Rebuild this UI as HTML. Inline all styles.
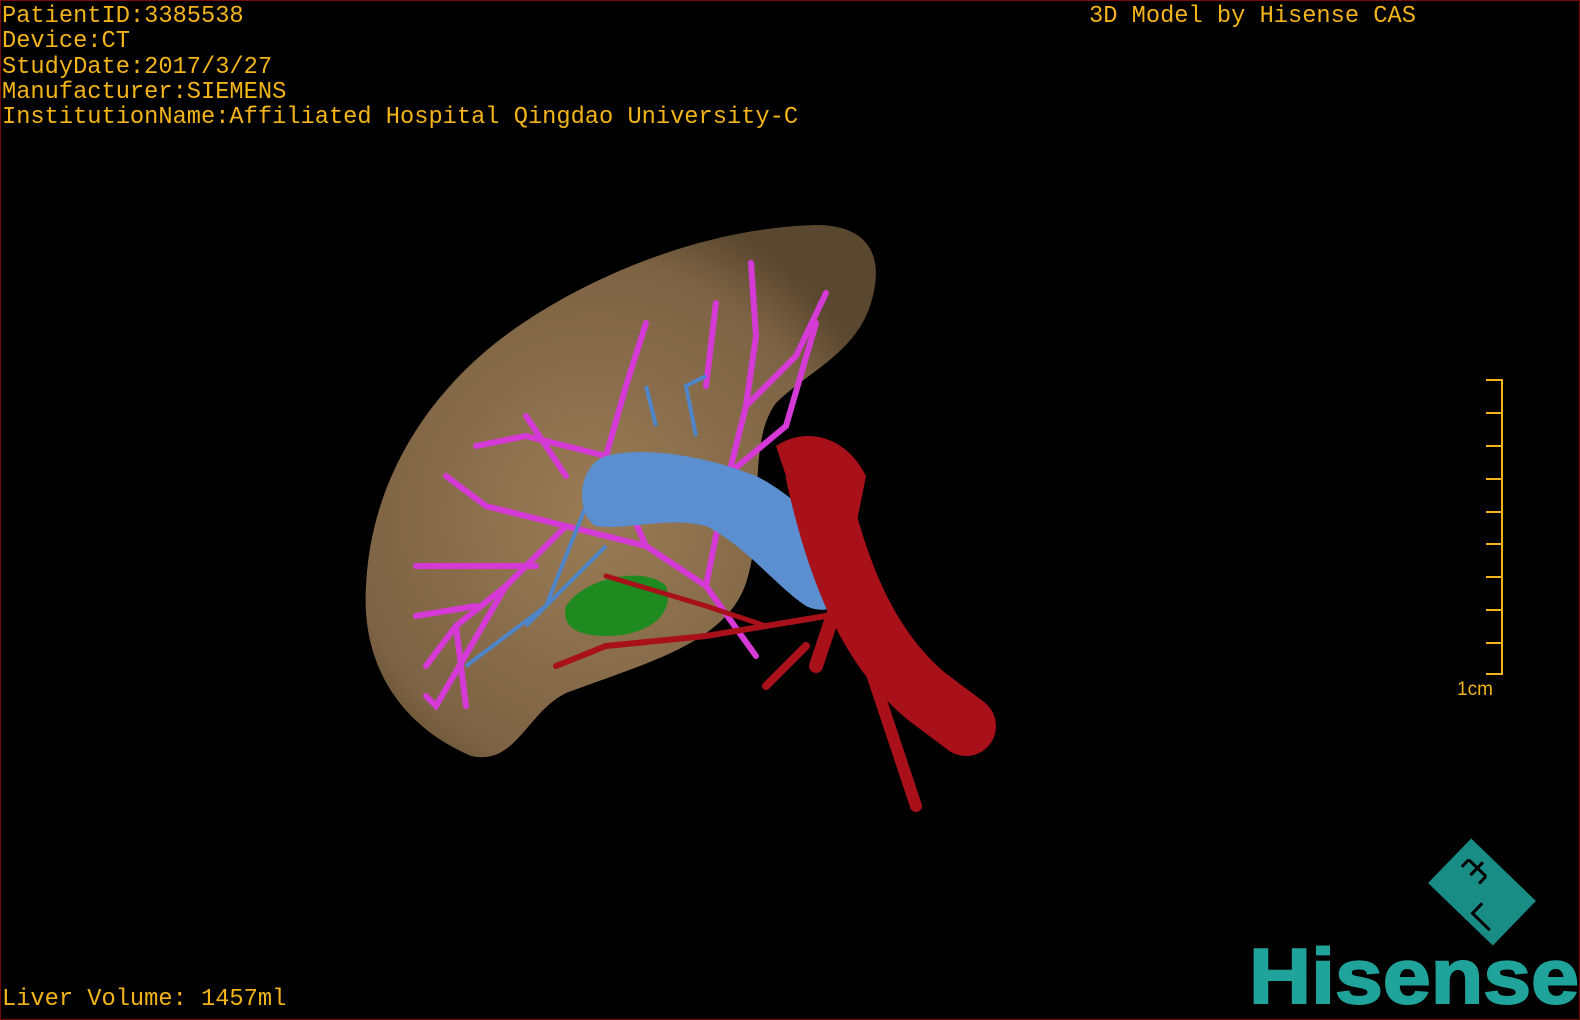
<!DOCTYPE html>
<html><head><meta charset="utf-8"><style>
html,body{margin:0;padding:0;background:#000;}
#c{position:relative;width:1580px;height:1020px;background:#000;overflow:hidden;box-sizing:border-box;border:1px solid #7a0a0a;}
.t{position:absolute;color:#f2b419;font-family:"Liberation Mono",monospace;font-size:23.7px;line-height:25.3px;white-space:pre;}
</style></head><body><div id="c">
<div class="t" style="left:1px;top:3px">PatientID:3385538
Device:CT
StudyDate:2017/3/27
Manufacturer:SIEMENS
InstitutionName:Affiliated Hospital Qingdao University-C</div>
<div class="t" style="left:1088px;top:3px">3D Model by Hisense CAS</div>
<div class="t" style="left:1px;top:986px">Liver Volume: 1457ml</div>
<svg width="1580" height="1020" style="position:absolute;left:0;top:0">
<defs><radialGradient id="lv" cx="0.45" cy="0.55" r="0.6"><stop offset="0" stop-color="#9a7b55"/><stop offset="0.8" stop-color="#7d6344"/><stop offset="1" stop-color="#5a4730"/></radialGradient></defs>
<path d="M470 755 C400 725 360 665 365 585 C370 475 432 382 522 322 C612 262 722 226 815 224 C865 224 885 252 870 302 C855 352 805 372 775 402 C745 442 765 522 745 582 C725 642 645 662 565 692 C525 712 515 765 470 755 Z" fill="url(#lv)"/>
<g stroke="#d63ad6" stroke-width="6" fill="none" stroke-linecap="round">
<path d="M755 655 L705 585 L645 545 L565 525 L485 505 L445 475"/>
<path d="M645 545 L605 455 L625 385 L645 322"/>
<path d="M605 455 L525 435 L475 445"/>
<path d="M705 585 L725 485 L745 405 L755 335 L750 262"/>
<path d="M745 405 L795 355 L825 292"/><path d="M725 475 L785 425 L815 322"/>
<path d="M565 525 L505 585 L455 625 L425 665"/><path d="M505 585 L435 705 L425 695"/>
<path d="M535 565 L415 565"/><path d="M475 605 L415 615"/><path d="M705 385 L715 302"/>
<path d="M455 625 L465 705"/><path d="M565 475 L525 415"/>
</g>
<path d="M565 605 C585 575 645 565 665 585 C675 615 645 635 605 635 C575 635 560 625 565 605Z" fill="#1f8a1f"/>
<g stroke="#4f85c9" stroke-width="4" fill="none"><path d="M585 505 L545 605 L465 665"/><path d="M605 545 L525 625"/><path d="M695 435 L685 385 L705 375"/><path d="M655 425 L645 385"/></g>
<path d="M605 455 C645 445 705 455 755 475 C795 495 835 535 845 575 C850 605 825 615 805 605 C775 585 745 545 705 525 C665 515 625 530 595 525 C575 515 575 465 605 455Z" fill="#5b8fd0"/>
<g stroke="#a8101a" fill="none" stroke-linecap="round"><path d="M815 475 C835 565 865 645 925 695 L965 725" stroke-width="60"/><path d="M835 605 L815 665" stroke-width="14"/><path d="M865 655 L895 745 L915 805" stroke-width="12"/><path d="M825 615 L765 625 L705 635 L605 645 L555 665" stroke-width="6"/><path d="M765 625 L705 605 L605 575" stroke-width="5"/><path d="M805 645 L765 685" stroke-width="8"/></g>
<path d="M775 445 C805 425 845 435 865 475 L855 525 L795 505Z" fill="#a8101a"/>
<g stroke="#f2b419" stroke-width="2" fill="none"><path d="M1485 379 H1501 V673 H1485"/>
<path d="M1485 412H1501M1485 445H1501M1485 478H1501M1485 511H1501M1485 543H1501M1485 576H1501M1485 609H1501M1485 642H1501"/></g>
<text x="1456" y="694" fill="#f2b419" font-family="Liberation Sans,sans-serif" font-size="19">1cm</text>
<g transform="translate(1481,891) rotate(44)"><rect x="-45" y="-31" width="90" height="62" fill="#1a8c86"/>
<path d="M-32 -14 H-8 M-32 -14 V-4 M-8 -14 V-4 M-20 -22 V-4 M8 8 V22 H32" stroke="#000" stroke-width="3" fill="none" transform="rotate(-44) rotate(44)"/></g>
<text x="1248" y="1002" fill="#1fa39a" font-family="Liberation Sans,sans-serif" font-weight="bold" font-size="78" textLength="330" lengthAdjust="spacingAndGlyphs" stroke="#1fa39a" stroke-width="2">Hisense</text>
</svg>
</div></body></html>
